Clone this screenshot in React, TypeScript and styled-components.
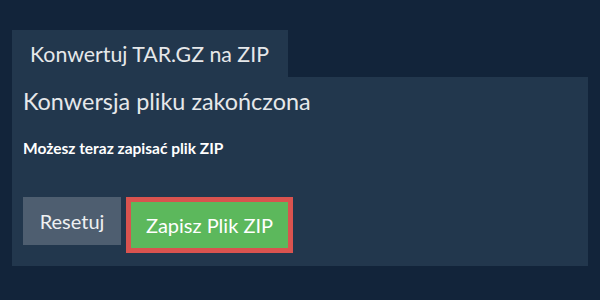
import React from "react";
import styled, { createGlobalStyle } from "styled-components";

const GlobalStyle = createGlobalStyle`
  html, body {
    margin: 0;
    padding: 0;
    background: #12243a;
    font-family: Lato, "Open Sans", sans-serif;
  }
`;

const Page = styled.div`
  width: 600px;
  height: 300px;
  box-sizing: border-box;
  padding: 30px 12px 34px;
  display: flex;
  flex-direction: column;
`;

const Tab = styled.div`
  align-self: flex-start;
  width: 276px;
  height: 47px;
  box-sizing: border-box;
  padding-left: 18px;
  display: flex;
  align-items: center;
  background: #22374d;
  color: #e6e8ea;
  font-size: 21.3px;
`;

const Panel = styled.div`
  flex: 1;
  background: #22374d;
  padding: 9px 11px 0;
  display: flex;
  flex-direction: column;
`;

const Heading = styled.h2`
  margin: 0;
  font-weight: 400;
  font-size: 23.4px;
  line-height: 30px;
  color: #e6e8ea;
`;

const Note = styled.p`
  margin: 23px 0 0;
  font-size: 15.5px;
  line-height: 18px;
  font-weight: 700;
  color: #ffffff;
`;

const Actions = styled.div`
  display: flex;
  align-items: flex-start;
  gap: 5px;
  margin-top: 40px;
`;

const Button = styled.button<{ $variant: "reset" | "save" }>`
  font-family: inherit;
  font-size: 20px;
  color: #ffffff;
  border: 0;
  cursor: pointer;
  box-sizing: border-box;
  ${(p) =>
    p.$variant === "save"
      ? `
    background: #5cb85c;
    border: 5px solid #d9534f;
    width: 167px;
    height: 56px;
  `
      : `
    background: #4e5e70;
    color: #eef0f2;
    width: 98px;
    height: 48px;
  `}
`;

export default function App() {
  return (
    <>
      <GlobalStyle />
      <Page>
        <Tab>Konwertuj TAR.GZ na ZIP</Tab>
        <Panel>
          <Heading>Konwersja pliku zakończona</Heading>
          <Note>Możesz teraz zapisać plik ZIP</Note>
          <Actions>
            <Button $variant="reset">Resetuj</Button>
            <Button $variant="save">Zapisz Plik ZIP</Button>
          </Actions>
        </Panel>
      </Page>
    </>
  );
}
